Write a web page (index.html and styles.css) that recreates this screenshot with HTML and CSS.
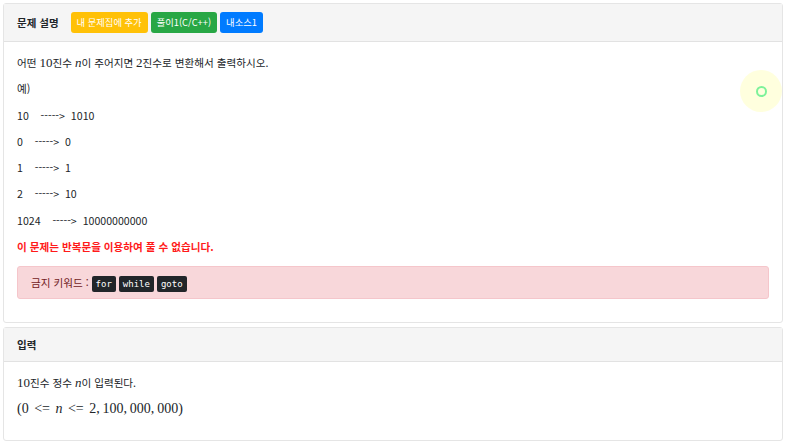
FILE: index.html
```html
<!DOCTYPE html>
<html lang="ko">
<head>
<meta charset="utf-8">
<title>문제 설명</title>
<link rel="stylesheet" href="styles.css">
</head>
<body>
<div class="page">
  <div class="card">
    <div class="card-header">
      <span class="title">문제 설명</span>
      <span class="badge badge-warning">내 문제집에 추가</span>
      <span class="badge badge-success">풀이1(C/C++)</span>
      <span class="badge badge-primary">내소스1</span>
    </div>
    <div class="card-body">
      <p>어떤 <span class="math">10</span>진수 <span class="math"><i>n</i></span>이 주어지면 <span class="math">2</span>진수로 변환해서 출력하시오.</p>
      <p>예)</p>
      <p>10&nbsp;&nbsp;&nbsp; -----&gt;&nbsp; 1010</p>
      <p>0&nbsp;&nbsp;&nbsp; -----&gt;&nbsp; 0</p>
      <p>1&nbsp;&nbsp;&nbsp; -----&gt;&nbsp; 1</p>
      <p>2&nbsp;&nbsp;&nbsp; -----&gt;&nbsp; 10</p>
      <p>1024&nbsp;&nbsp;&nbsp; -----&gt;&nbsp; 10000000000</p>
      <p class="warn">이 문제는 반복문을 이용하여 풀 수 없습니다.</p>
      <div class="alert">
        금지 키워드 : <code>for</code> <code>while</code> <code>goto</code>
      </div>
    </div>
  </div>

  <div class="card">
    <div class="card-header">
      <span class="title">입력</span>
    </div>
    <div class="card-body">
      <p><span class="math">10</span>진수 정수 <span class="math"><i>n</i></span>이 입력된다.</p>
      <p class="formula">(0 <span class="rel">&lt;=</span> <i>n</i> <span class="rel">&lt;=</span> 2,&thinsp;100,&thinsp;000,&thinsp;000)</p>
    </div>
  </div>
</div>
<div class="cursor"><span class="ring"></span></div>
</body>
</html>
```

FILE: styles.css
```css
body {
  margin: 0;
  font-family: "Noto Sans CJK KR", "Noto Sans", sans-serif;
  font-size: 10.6px;
  color: #212529;
  background: #fff;
}
.page {
  padding: 3px;
  width: 780px;
  display: flex;
  flex-direction: column;
  gap: 4px;
}
.card {
  border: 1px solid #e5e5e5;
  border-radius: 3px;
  background: #fff;
}
.card-header {
  background: #f5f5f5;
  border-bottom: 1px solid #e2e2e2;
  display: flex;
  align-items: center;
  padding: 8px 13px;
  min-height: 17px;
}
.title {
  font-weight: bold;
  font-size: 10.5px;
  line-height: 17px;
  margin-right: 12px;
}
.badge {
  display: inline-block;
  height: 21px;
  line-height: 21px;
  padding: 0 6px;
  margin-right: 3px;
  border-radius: 3px;
  color: #fff;
  font-size: 9.3px;
}
.badge-warning { background: #ffc107; }
.badge-success { background: #28a745; }
.badge-primary { background: #007bff; }
.card-body {
  padding: 13px 13px 23px;
}
.card-body p {
  margin: 0 0 10.3px;
  line-height: 16px;
}
.card-body p:last-child {
  margin-bottom: 0;
}
.math {
  font-family: "Liberation Serif", "DejaVu Serif", serif;
  font-size: 13px;
}
.warn {
  color: #ff1a1a;
  font-weight: bold;
}
.card-body .warn {
  margin-bottom: 11px;
}
.alert {
  background: #f8d7da;
  border: 1px solid #f5c6cb;
  border-radius: 3px;
  color: #721c24;
  padding: 7px 13px;
  height: 17px;
  line-height: 17px;
}
.alert code {
  display: inline-block;
  background: #212529;
  color: #fff;
  font-family: "DejaVu Sans Mono", "Liberation Mono", monospace;
  font-size: 9px;
  padding: 0 4px;
  border-radius: 2px;
  line-height: 16px;
}
.formula {
  font-family: "Liberation Serif", "DejaVu Serif", serif;
  font-size: 14px;
}
.rel {
  margin: 0 2px;
}
.cursor {
  position: absolute;
  left: 740px;
  top: 70px;
  width: 42px;
  height: 42px;
  border-radius: 50%;
  background: rgba(255, 255, 200, 0.6);
  display: flex;
  align-items: center;
  justify-content: center;
}
.ring {
  width: 7px;
  height: 7px;
  border: 2.5px solid #7df29a;
  border-radius: 50%;
}
```
